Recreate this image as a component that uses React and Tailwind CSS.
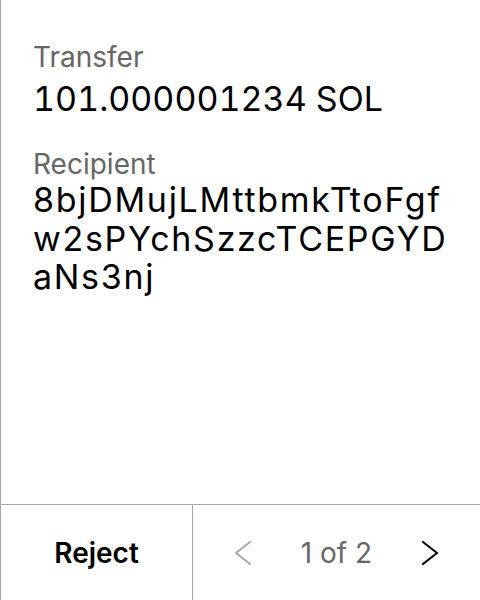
import React from 'react';

function Chevron({ dir, className }) {
  return (
    <svg width="18" height="26" viewBox="0 0 18 26" fill="none" stroke="currentColor" strokeWidth="2.2" strokeLinecap="round" strokeLinejoin="round" className={className}>
      {dir === 'left' ? <path d="M16 2 L2 13 L16 24" /> : <path d="M2 2 L16 13 L2 24" />}
    </svg>
  );
}

export default function App() {
  return (
    <div className="h-[600px] w-[480px] flex flex-col border-l border-[#a8a8a8] bg-white text-black" style={{ fontFamily: 'Inter, "Noto Sans", sans-serif' }}>
      <div className="flex-1 pl-[32px] pr-[20px] pt-[40px]">
        <div className="text-[28px] leading-[34px] text-[#666]">Transfer</div>
        <div className="text-[34px] leading-[40px] mt-[5px] tabular-nums">101.000001234 SOL</div>
        <div className="text-[28px] leading-[34px] text-[#666] mt-[28px]">Recipient</div>
        <div className="w-[424px] text-[34px] leading-[38.5px] tracking-[1.7px] break-all">8bjDMujLMttbmkTtoFgfw2sPYchSzzcTCEPGYDaNs3nj</div>
      </div>
      <div className="h-[96px] flex border-t border-[#a8a8a8]">
        <div className="w-[192px] flex items-center justify-center border-r border-[#a8a8a8] text-[28px] font-semibold">Reject</div>
        <div className="flex-1 flex items-center justify-between pl-[41px] pr-[41px]">
          <Chevron dir="left" className="text-[#aaa]" />
          <span className="text-[28px] text-[#666]">1 of 2</span>
          <Chevron dir="right" className="text-black" />
        </div>
      </div>
    </div>
  );
}
